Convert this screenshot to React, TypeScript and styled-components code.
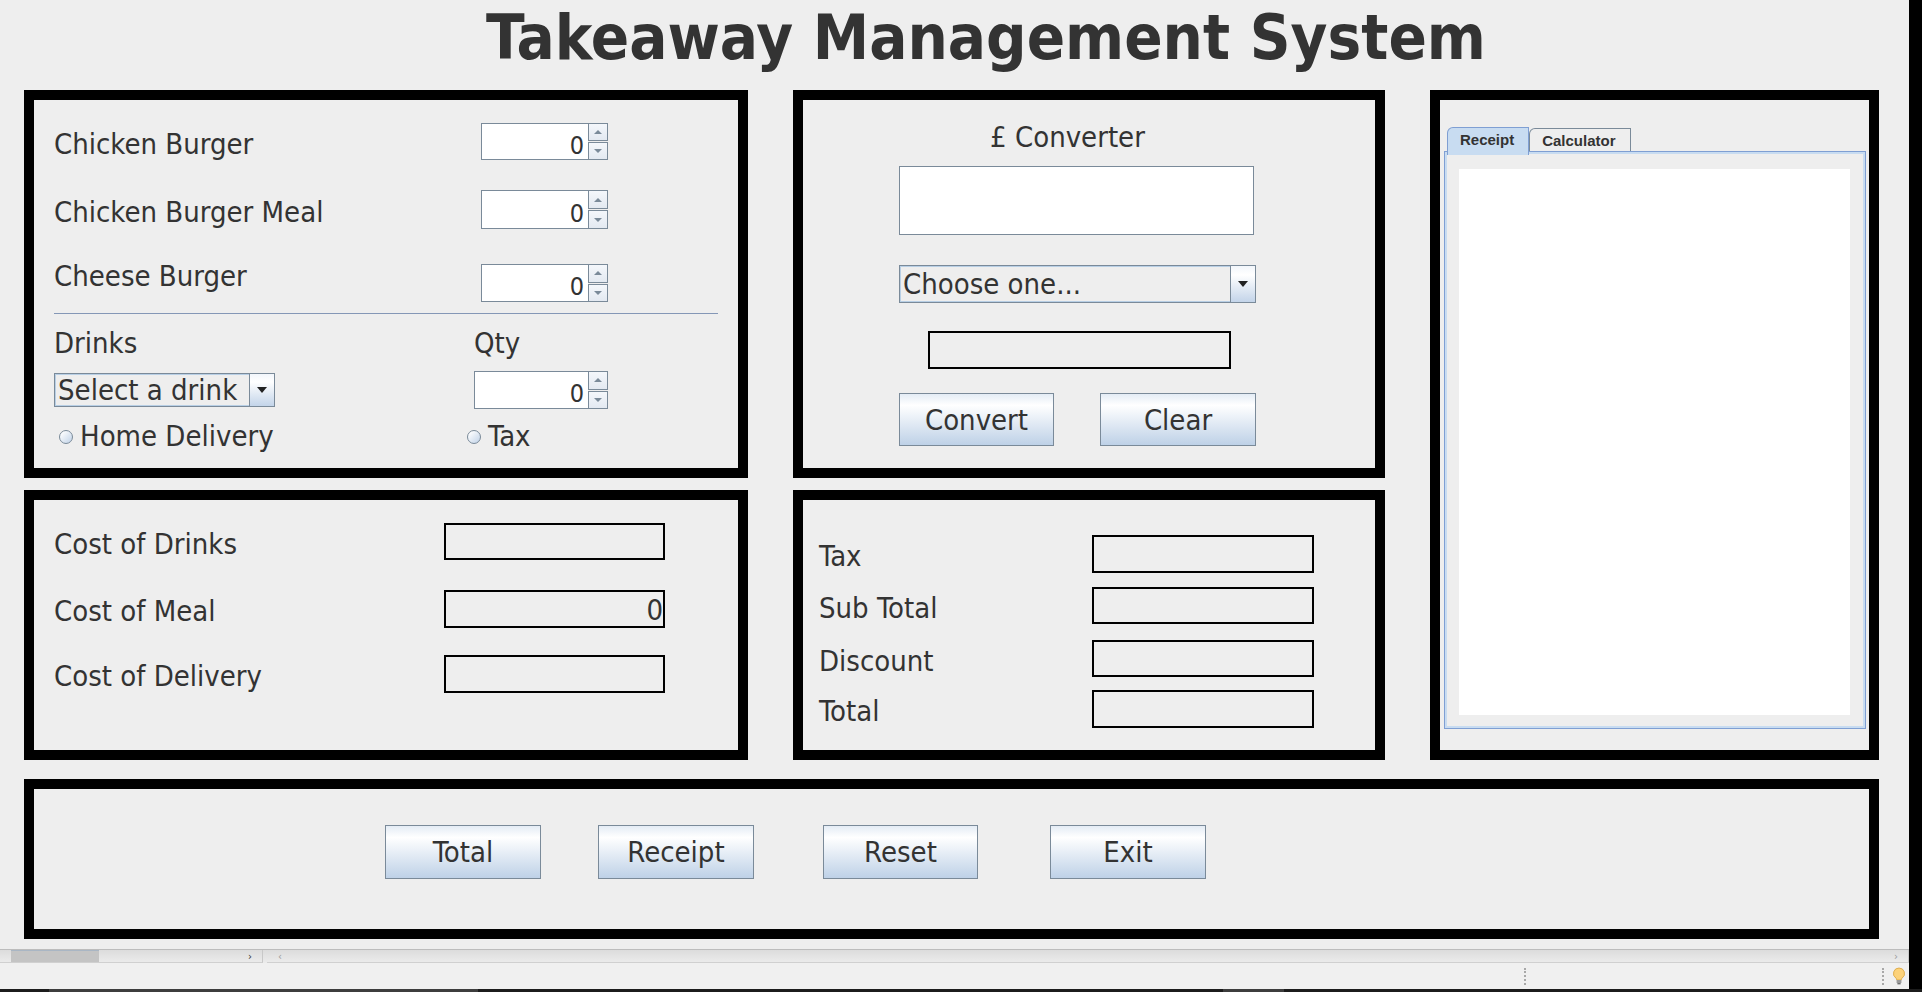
import styled, { createGlobalStyle } from 'styled-components'

const swingFont = `'DejaVu Sans Condensed', 'DejaVu Sans', sans-serif`

const GlobalStyle = createGlobalStyle`
  html, body {
    margin: 0;
    padding: 0;
  }
  body {
    width: 1922px;
    height: 992px;
    overflow: hidden;
    background: #eeeeee;
    font-family: ${swingFont};
    font-stretch: condensed;
    color: #333333;
  }
`

const Screen = styled.div`
  width: 1922px;
  height: 992px;
  display: flex;
  flex-direction: column;
`

const Desk = styled.div`
  height: 989px;
  display: flex;
`

const Window = styled.div`
  width: 1909px;
  display: flex;
  flex-direction: column;
`

const EdgeStrip = styled.div`
  flex: 1;
  background: #000;
`

const Taskbar = styled.div`
  flex: 1;
  display: flex;
  background: #1c1c1c;

  .seg-a {
    margin-left: 49px;
    width: 429px;
    background: #3d3d3d;
  }
  .seg-b {
    margin-left: 745px;
    width: 61px;
    background: #3d3d3d;
  }
`

const Form = styled.div`
  height: 949px;
  background: #eeeeee;
  display: flex;
  flex-direction: column;
`

const Title = styled.h1`
  margin: 6px 0 0 50px;
  width: 1872px;
  height: 63px;
  text-align: center;
  font-size: 63px;
  line-height: 63px;
  font-weight: bold;
  color: #333333;
  white-space: nowrap;
`

const Board = styled.div`
  margin: 21px 0 0 24px;
  display: grid;
  grid-template-columns: 724px 592px 449px;
  grid-template-rows: 388px 270px 167px;
  column-gap: 45px;
  row-gap: 12px;
`

const Panel = styled.section<{ $rows: string; $cols: string; $pad?: string }>`
  box-sizing: border-box;
  border: 10px solid #000;
  background: #eeeeee;
  display: flex;
  flex-direction: column;
  grid-row: ${({ $rows }) => $rows};
  grid-column: ${({ $cols }) => $cols};
  padding: ${({ $pad }) => $pad ?? '0'};
`

const ButtonPanel = styled(Panel)`
  align-self: end;
  height: 160px;
  flex-direction: row;
  align-items: flex-start;
`

const Row = styled.div<{ $top: number; $height: number }>`
  display: flex;
  align-items: center;
  flex: none;
  margin-top: ${({ $top }) => $top}px;
  height: ${({ $height }) => $height}px;
`

// $shift moves the text up (negative) or down (positive) from the row centre
const Label = styled.span<{ $width?: number; $shift?: number }>`
  display: block;
  flex: none;
  width: ${({ $width }) => ($width ? `${$width}px` : 'auto')};
  margin-top: ${({ $shift = 2.5 }) => Math.max(0, $shift * 2)}px;
  margin-bottom: ${({ $shift = 2.5 }) => Math.max(0, -$shift * 2)}px;
  font-size: 29px;
  line-height: 29px;
  white-space: nowrap;
`

// ---- spinner ----
const Spinner = styled.div<{ $width: number }>`
  display: flex;
  flex: none;
  width: ${({ $width }) => $width}px;
  height: 100%;
`

const SpinField = styled.div`
  flex: 1;
  box-sizing: border-box;
  background: #fff;
  border: 1px solid #7a8a99;
  border-right: none;
  display: flex;
  align-items: center;
  justify-content: flex-end;
  padding: 7px 4px 0 0;
  font-size: 25px;
  line-height: 25px;
`

const SpinButtons = styled.div`
  width: 20px;
  display: flex;
  flex-direction: column;
  gap: 1px;
`

const SpinButton = styled.div<{ $dir: 'up' | 'down' }>`
  flex: 1;
  box-sizing: border-box;
  border: 1px solid #7a8a99;
  background: linear-gradient(#f4f7fb, #e3e9f1);
  display: flex;
  align-items: center;
  justify-content: center;

  &::after {
    content: '';
    width: 0;
    height: 0;
    border-left: 4px solid transparent;
    border-right: 4px solid transparent;
    ${({ $dir }) =>
      $dir === 'up'
        ? 'border-bottom: 4px solid #7a8a99;'
        : 'border-top: 4px solid #7a8a99;'}
  }
`

function NumberSpinner({ width, value = 0 }: { width: number; value?: number }) {
  return (
    <Spinner $width={width}>
      <SpinField>{value}</SpinField>
      <SpinButtons>
        <SpinButton $dir='up' />
        <SpinButton $dir='down' />
      </SpinButtons>
    </Spinner>
  )
}

// ---- combo ----
const Combo = styled.div<{ $width: number; $height: number }>`
  box-sizing: border-box;
  display: flex;
  flex: none;
  width: ${({ $width }) => $width}px;
  height: ${({ $height }) => $height}px;
  border: 1px solid #7a8a99;
  background: #eeeeee;
  box-shadow: inset 0 0 0 1px #b8cfe5;
`

const ComboText = styled.div`
  flex: 1;
  display: flex;
  align-items: center;
  padding-left: 3px;
  font-size: 29px;
  line-height: 29px;
  white-space: nowrap;
  overflow: hidden;
`

const ComboArrow = styled.div`
  width: 24px;
  border-left: 1px solid #7a8a99;
  background: linear-gradient(#f2f6fb 0%, #ffffff 25%, #c3d4e9 100%);
  display: flex;
  align-items: center;
  justify-content: center;

  &::after {
    content: '';
    width: 0;
    height: 0;
    border-left: 5px solid transparent;
    border-right: 5px solid transparent;
    border-top: 6px solid #222;
  }
`

function ComboBox({ width, height, text }: { width: number; height: number; text: string }) {
  return (
    <Combo $width={width} $height={height}>
      <ComboText>{text}</ComboText>
      <ComboArrow />
    </Combo>
  )
}

const ComboCell = styled.div<{ $width: number }>`
  flex: none;
  width: ${({ $width }) => $width}px;
`

// ---- radio ----
const RadioOption = styled.label<{ $width?: number; $indent?: number }>`
  display: flex;
  align-items: center;
  gap: 7px;
  box-sizing: border-box;
  width: ${({ $width }) => ($width ? `${$width}px` : 'auto')};
  padding-left: ${({ $indent }) => $indent ?? 0}px;
  font-size: 29px;
  line-height: 29px;
`

const RadioDot = styled.span`
  width: 12px;
  height: 12px;
  border-radius: 50%;
  border: 1px solid #7a8a99;
  background: linear-gradient(135deg, #ffffff 10%, #c7d7ea 90%);
`

// ---- buttons and fields ----
const SwingButton = styled.button<{ $width: number; $height: number; $gap?: number }>`
  box-sizing: border-box;
  width: ${({ $width }) => $width}px;
  height: ${({ $height }) => $height}px;
  margin-left: ${({ $gap }) => $gap ?? 0}px;
  padding: 0;
  border: 1px solid #7a8a99;
  background: linear-gradient(#e4ecf5 0%, #ffffff 22%, #bed1e7 100%);
  font-family: ${swingFont};
  font-stretch: condensed;
  font-size: 29px;
  color: #333333;
`

const OutField = styled.div<{ $width: number; $height: number }>`
  box-sizing: border-box;
  flex: none;
  width: ${({ $width }) => $width}px;
  height: ${({ $height }) => $height}px;
  border: 2px solid #000;
  display: flex;
  align-items: center;
  justify-content: flex-end;
  padding-top: 3px;
  font-size: 29px;
  line-height: 29px;
`

const Separator = styled.hr`
  flex: none;
  margin: 11px 0 0 0;
  width: 664px;
  height: 0;
  border: none;
  border-top: 1px solid #8497b6;
`

// ---- converter panel ----
const ConverterColumn = styled.div`
  margin-left: 96px;
  width: 357px;
  display: flex;
  flex-direction: column;
`

const ConverterTitle = styled.div`
  margin-top: 23px;
  height: 30px;
  padding-right: 20px;
  text-align: center;
  font-size: 29px;
  line-height: 29px;
`

const TextInput = styled.div`
  box-sizing: border-box;
  margin-top: 13px;
  width: 355px;
  height: 69px;
  background: #fff;
  border: 1px solid #7a8a99;
`

const ComboSlot = styled.div`
  margin-top: 30px;
`

const ResultBox = styled(OutField)`
  margin: 28px 0 0 29px;
`

const ConverterButtons = styled.div`
  margin-top: 24px;
  display: flex;
  gap: 46px;
`

// ---- tabs ----
const TabPane = styled.div`
  margin: 27px 0 0 4px;
  width: 422px;
  display: flex;
  flex-direction: column;
`

const TabStrip = styled.div`
  height: 24px;
  display: flex;
  align-items: flex-end;
  padding-left: 3px;
`

const Tab = styled.div<{ $active?: boolean }>`
  box-sizing: border-box;
  height: ${({ $active }) => ($active ? 28 : 23)}px;
  margin-bottom: ${({ $active }) => ($active ? -4 : 0)}px;
  padding: 3px 14px 0 12px;
  border: 1px solid ${({ $active }) => ($active ? '#7f9fd3' : '#7a8a99')};
  border-bottom: none;
  border-top-left-radius: 6px;
  background: ${({ $active }) => ($active ? '#c8dcf1' : '#eeeeee')};
  font-family: 'Liberation Sans', Arial, sans-serif;
  font-stretch: normal;
  font-weight: bold;
  font-size: 15px;
  line-height: 18px;
  color: #333333;
  position: relative;
  z-index: ${({ $active }) => ($active ? 1 : 0)};
`

const TabBody = styled.div`
  box-sizing: border-box;
  height: 578px;
  border: 1px solid #7f9fd3;
  box-shadow: inset 0 0 0 2px #c8dcf1;
  padding: 17px 15px 13px 14px;
  display: flex;
`

const ReceiptArea = styled.div`
  flex: 1;
  background: #fff;
`

// ---- IDE chrome below the form ----
const ScrollStrip = styled.div`
  height: 13px;
  border-top: 1px solid #bcbcbc;
  background: linear-gradient(#dcdcdc, #ececec);
  display: flex;
  align-items: stretch;
`

const ScrollSegment = styled.div<{ $width?: number }>`
  box-sizing: border-box;
  ${({ $width }) => ($width ? `width: ${$width}px;` : 'flex: 1;')}
  border-right: 1px solid #c8c8c8;
  border-bottom: 1px solid #d0d0d0;
  display: flex;
  align-items: center;
  justify-content: space-between;
  padding: 0 10px 0 11px;
  font-family: 'DejaVu Sans', sans-serif;
  font-size: 11px;
  color: #8a8a8a;
`

const ScrollGap = styled.div`
  width: 4px;
`

const ScrollThumb = styled.div`
  width: 88px;
  height: 11px;
  background: #c4c4c4;
  border-top: 1px solid #a9b6c4;
`

const ScrollArrow = styled.span<{ $dark?: boolean }>`
  color: ${({ $dark }) => ($dark ? '#333' : '#9a9a9a')};
  line-height: 11px;
`

const StatusBar = styled.div`
  flex: 1;
  background: #f0f0f0;
  display: flex;
  align-items: center;
  padding-left: 1524px;
`

const StatusDivider = styled.div<{ $gap: number }>`
  margin-left: ${({ $gap }) => $gap}px;
  height: 17px;
  border-left: 2px dotted #a8a8a8;
`

function Bulb() {
  return (
    <svg width='14' height='18' viewBox='0 0 14 18' style={{ marginLeft: 8 }}>
      <path
        d='M7 1a5.5 5.5 0 0 0-3.2 10c.6.5.9 1.1.9 1.8V13h4.6v-.2c0-.7.3-1.3.9-1.8A5.5 5.5 0 0 0 7 1z'
        fill='#fcd27a'
        stroke='#d8a23a'
        strokeWidth='0.8'
      />
      <rect x='4.6' y='13' width='4.8' height='3' fill='#9a9a9a' />
      <rect x='5.4' y='16' width='3.2' height='1.4' fill='#6e6e6e' />
    </svg>
  )
}

export default function App() {
  return (
    <>
      <GlobalStyle />
      <Screen>
        <Desk>
          <Window>
            <Form>
              <Title>Takeaway Management System</Title>
              <Board>
                <Panel $rows='1' $cols='1' $pad='0 0 0 20px'>
                  <Row $top={23} $height={37}>
                    <Label $width={427}>Chicken Burger</Label>
                    <NumberSpinner width={127} />
                  </Row>
                  <Row $top={30} $height={39}>
                    <Label $width={427}>Chicken Burger Meal</Label>
                    <NumberSpinner width={127} />
                  </Row>
                  <Row $top={35} $height={38}>
                    <Label $width={427} $shift={-7}>
                      Cheese Burger
                    </Label>
                    <NumberSpinner width={127} />
                  </Row>
                  <Separator />
                  <Row $top={15} $height={29}>
                    <Label $width={420} $shift={0}>
                      Drinks
                    </Label>
                    <Label $shift={0}>Qty</Label>
                  </Row>
                  <Row $top={13} $height={38}>
                    <ComboCell $width={420}>
                      <ComboBox width={221} height={34} text='Select a drink' />
                    </ComboCell>
                    <NumberSpinner width={134} />
                  </Row>
                  <Row $top={13} $height={29}>
                    <RadioOption $width={413} $indent={5}>
                      <RadioDot />
                      Home Delivery
                    </RadioOption>
                    <RadioOption>
                      <RadioDot />
                      Tax
                    </RadioOption>
                  </Row>
                </Panel>

                <Panel $rows='1' $cols='2'>
                  <ConverterColumn>
                    <ConverterTitle>£ Converter</ConverterTitle>
                    <TextInput />
                    <ComboSlot>
                      <ComboBox width={357} height={38} text='Choose one...' />
                    </ComboSlot>
                    <ResultBox $width={303} $height={38} />
                    <ConverterButtons>
                      <SwingButton $width={155} $height={53}>
                        Convert
                      </SwingButton>
                      <SwingButton $width={156} $height={53}>
                        Clear
                      </SwingButton>
                    </ConverterButtons>
                  </ConverterColumn>
                </Panel>

                <Panel $rows='1 / 3' $cols='3'>
                  <TabPane>
                    <TabStrip>
                      <Tab $active>Receipt</Tab>
                      <Tab>Calculator</Tab>
                    </TabStrip>
                    <TabBody>
                      <ReceiptArea />
                    </TabBody>
                  </TabPane>
                </Panel>

                <Panel $rows='2' $cols='1' $pad='0 0 0 20px'>
                  <Row $top={23} $height={37}>
                    <Label $width={390}>Cost of Drinks</Label>
                    <OutField $width={221} $height={37} />
                  </Row>
                  <Row $top={30} $height={38}>
                    <Label $width={390}>Cost of Meal</Label>
                    <OutField $width={221} $height={38}>
                      0
                    </OutField>
                  </Row>
                  <Row $top={27} $height={38}>
                    <Label $width={390}>Cost of Delivery</Label>
                    <OutField $width={221} $height={38} />
                  </Row>
                </Panel>

                <Panel $rows='2' $cols='2' $pad='0 0 0 16px'>
                  <Row $top={35} $height={38}>
                    <Label $width={273}>Tax</Label>
                    <OutField $width={222} $height={38} />
                  </Row>
                  <Row $top={14} $height={37}>
                    <Label $width={273}>Sub Total</Label>
                    <OutField $width={222} $height={37} />
                  </Row>
                  <Row $top={16} $height={37}>
                    <Label $width={273}>Discount</Label>
                    <OutField $width={222} $height={37} />
                  </Row>
                  <Row $top={13} $height={38}>
                    <Label $width={273}>Total</Label>
                    <OutField $width={222} $height={38} />
                  </Row>
                </Panel>

                <ButtonPanel $rows='3' $cols='1 / 4' $pad='36px 0 0 351px'>
                  <SwingButton $width={156} $height={54}>
                    Total
                  </SwingButton>
                  <SwingButton $width={156} $height={54} $gap={57}>
                    Receipt
                  </SwingButton>
                  <SwingButton $width={155} $height={54} $gap={69}>
                    Reset
                  </SwingButton>
                  <SwingButton $width={156} $height={54} $gap={72}>
                    Exit
                  </SwingButton>
                </ButtonPanel>
              </Board>
            </Form>
            <ScrollStrip>
              <ScrollSegment $width={263}>
                <ScrollThumb />
                <ScrollArrow $dark>›</ScrollArrow>
              </ScrollSegment>
              <ScrollGap />
              <ScrollSegment>
                <ScrollArrow>‹</ScrollArrow>
                <ScrollArrow>›</ScrollArrow>
              </ScrollSegment>
            </ScrollStrip>
            <StatusBar>
              <StatusDivider $gap={0} />
              <StatusDivider $gap={356} />
              <Bulb />
            </StatusBar>
          </Window>
          <EdgeStrip />
        </Desk>
        <Taskbar>
          <div className='seg-a' />
          <div className='seg-b' />
        </Taskbar>
      </Screen>
    </>
  )
}
